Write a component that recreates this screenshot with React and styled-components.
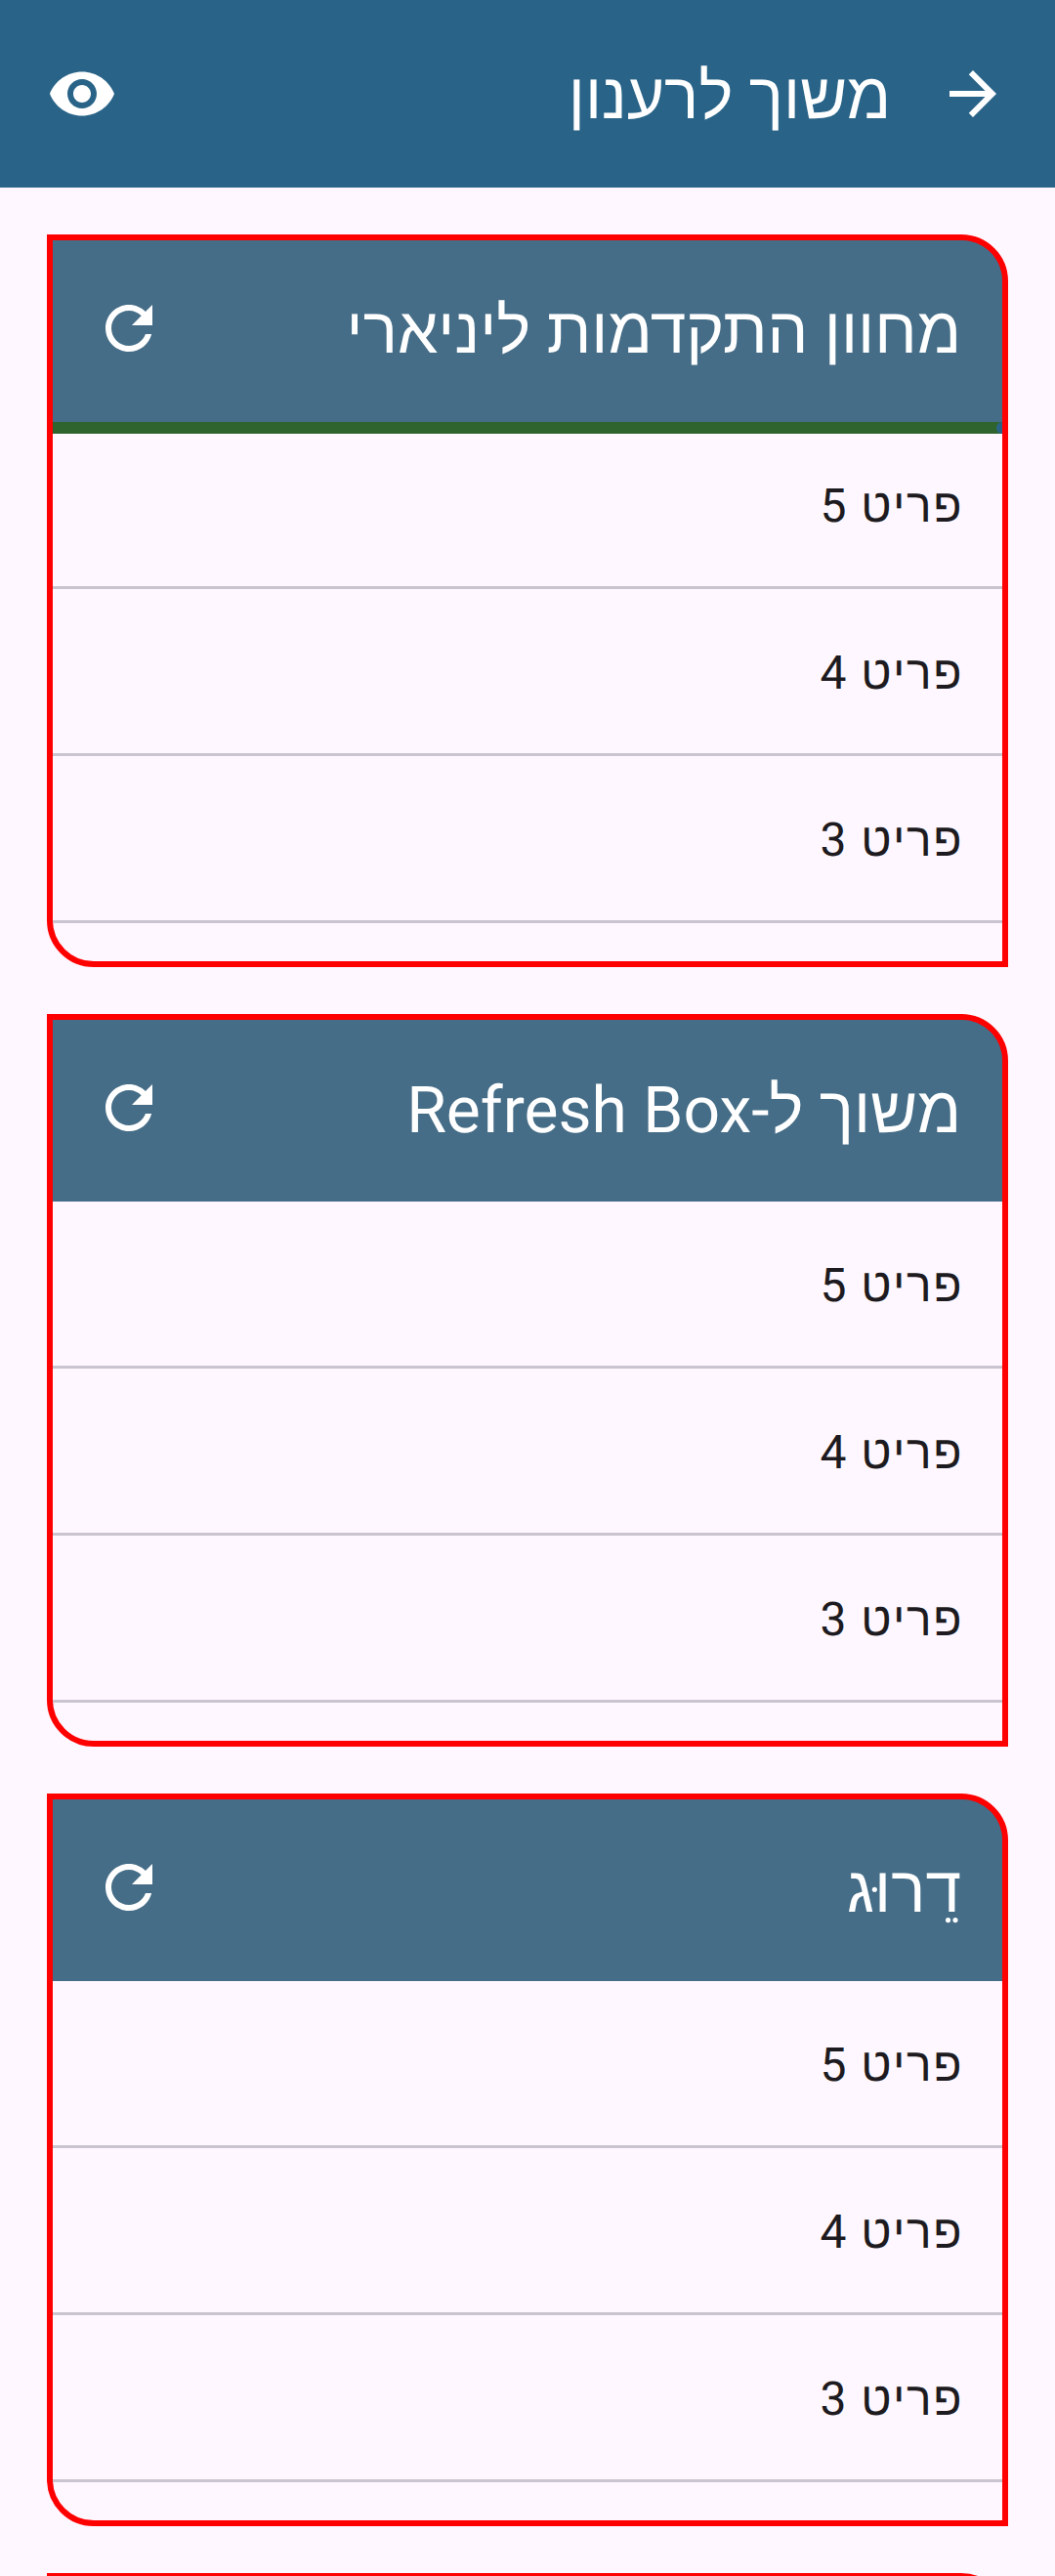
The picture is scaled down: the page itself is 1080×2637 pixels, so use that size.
import React from "react";
import styled, { createGlobalStyle } from "styled-components";

const GlobalStyle = createGlobalStyle`
  *, *::before, *::after { box-sizing: border-box; }
  body {
    margin: 0;
    background: #fef7ff;
    font-family: Roboto, "Liberation Sans", sans-serif;
    text-rendering: geometricPrecision;
  }
`;

const Screen = styled.div`
  display: flex;
  flex-direction: column;
  width: 1080px;
  height: 2637px;
  overflow: hidden;
  background: #fef7ff;
  color: #1d1b20;
`;

const AppBar = styled.header`
  display: flex;
  flex: none;
  align-items: center;
  gap: 48px;
  height: 192px;
  padding: 0 48px;
  background: #296488;
  color: #fff;
`;

const Title = styled.h1`
  flex: 1;
  margin: 0;
  padding-top: 7px;
  font-size: 66px;
  font-weight: 400;
  line-height: 84px;
  white-space: nowrap;
`;

const Icon = styled.svg`
  flex: none;
  width: 72px;
  height: 72px;
  fill: currentColor;
`;

const CardList = styled.main`
  display: flex;
  flex-direction: column;
  gap: 48px;
  padding: 48px;
`;

const Card = styled.section`
  flex: none;
  height: 750px;
  border: 6px solid #f00;
  border-radius: 0 48px 0 48px;
  overflow: hidden;
  background: linear-gradient(#456d87 186px, #fef7ff 186px) no-repeat;
`;

const CardHeader = styled.div`
  display: flex;
  align-items: center;
  height: 186px;
  padding: 0 42px 6px;
  background: #456d87;
  color: #fff;
`;

const ProgressTrack = styled.div`
  display: flex;
  height: 12px;
  margin-bottom: -12px;
  background: #30642f;
`;

const ProgressStop = styled.span`
  width: 12px;
  height: 12px;
  margin-inline-start: -6px;
  border-radius: 50%;
  background: #296488;
`;

const Row = styled.div`
  display: flex;
  align-items: center;
  height: 171px;
  padding: 3px 40px 0;
  border-bottom: 3px solid #cac4d0;
  font-size: 48px;
  line-height: 72px;
  letter-spacing: 1.5px;
`;

const BackIcon = () => (
  <Icon viewBox="0 0 24 24">
    <path d="M12 4l-1.41 1.41L16.17 11H4v2h12.17l-5.58 5.59L12 20l8-8z" />
  </Icon>
);

const EyeIcon = () => (
  <Icon viewBox="0 0 24 24">
    <path d="M12 4.5C7 4.5 2.73 7.61 1 12c1.73 4.39 6 7.5 11 7.5s9.27-3.11 11-7.5c-1.73-4.39-6-7.5-11-7.5zM12 17c-2.76 0-5-2.24-5-5s2.24-5 5-5 5 2.24 5 5-2.24 5-5 5zm0-8c-1.66 0-3 1.34-3 3s1.34 3 3 3 3-1.34 3-3-1.34-3-3-3z" />
  </Icon>
);

const RefreshIcon = () => (
  <Icon viewBox="0 0 24 24">
    <path d="M17.65 6.35C16.2 4.9 14.21 4 12 4c-4.42 0-7.99 3.58-7.99 8s3.57 8 7.99 8c3.73 0 6.84-2.55 7.73-6h-2.08c-.82 2.33-3.04 4-5.65 4-3.31 0-6-2.69-6-6s2.69-6 6-6c1.66 0 3.14.69 4.22 1.78L13 11h7V4l-2.35 2.35z" />
  </Icon>
);

const items = ["פריט 5", "פריט 4", "פריט 3"];

function RefreshCard({ title, loading }) {
  return (
    <Card>
      <CardHeader>
        <Title as="h2">{title}</Title>
        <RefreshIcon />
      </CardHeader>
      {loading && (
        <ProgressTrack>
          <ProgressStop />
        </ProgressTrack>
      )}
      {items.map((item) => (
        <Row key={item}>{item}</Row>
      ))}
    </Card>
  );
}

export default function App() {
  return (
    <>
      <GlobalStyle />
      <Screen dir="rtl" lang="he">
        <AppBar>
          <BackIcon />
          <Title>משוך לרענון</Title>
          <EyeIcon />
        </AppBar>
        <CardList>
          <RefreshCard title="מחוון התקדמות ליניארי" loading />
          <RefreshCard title="משוך ל-Refresh Box" />
          <RefreshCard title="דֵרוּג" />
          <Card />
        </CardList>
      </Screen>
    </>
  );
}
